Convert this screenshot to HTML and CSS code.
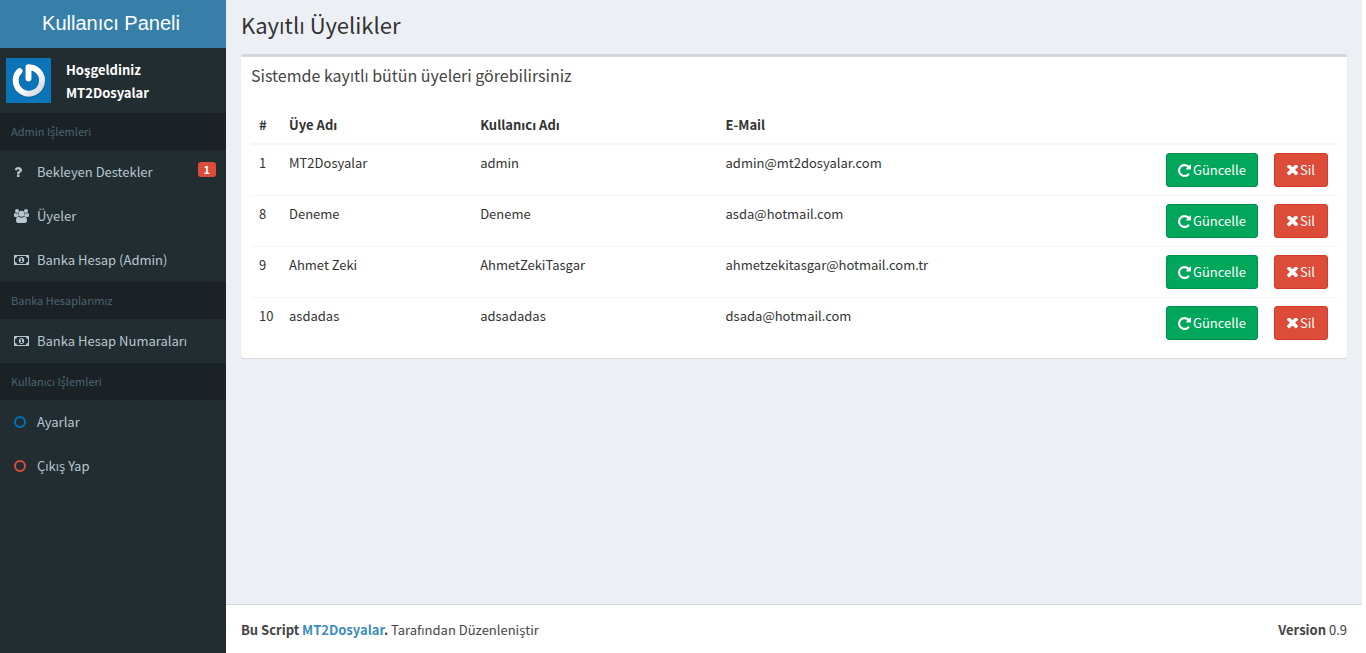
FILE: index.html
```html
<!DOCTYPE html>
<html lang="tr">
<head>
  <meta charset="UTF-8">
  <meta name="viewport" content="width=device-width, initial-scale=1.0">
  <title>Kullanıcı Paneli</title>
  <link rel="stylesheet" href="styles.css">
</head>
<body>
  <!-- Icon set -->
  <svg class="icon-defs" xmlns="http://www.w3.org/2000/svg">
    <symbol id="icon-question" viewBox="0 0 1792 1792">
      <path d="M1088 1256v240q0 16-12 28t-28 12h-240q-16 0-28-12t-12-28v-240q0-16 12-28t28-12h240q16 0 28 12t12 28zm316-600q0 54-15.500 101t-35 76.500-55 59.500-57.500 43.500-61 35.500q-41 23-68.500 65t-27.500 67q0 17-12 32.500t-28 15.500h-240q-15 0-25.500-18.500t-10.500-37.500v-45q0-83 65-156.500t143-108.500q59-27 84-56t25-76q0-42-46.500-74t-107.500-32q-65 0-108 29-35 25-107 115-13 16-31 16-12 0-25-8l-164-125q-13-10-15.500-25t5.500-28q160-266 464-266 80 0 161 31t146 83 106 127.500 41 158.500z"/>
    </symbol>
    <symbol id="icon-users" viewBox="0 0 15 14">
      <circle cx="3" cy="2" r="2"/>
      <circle cx="12" cy="2" r="2"/>
      <path d="M0 6.500C0 5 .3 3.900 1.200 3.900c.6.400 1.200.6 1.800.6.500 0 .9-.1 1.300-.3C4.100 5.400 4.500 6.400 5.100 7.100 4.200 7.100 3.400 7.500 2.900 8H1.600C.6 8 0 7.500 0 6.500z"/>
      <path d="M15 6.500c0-1.500-.3-2.600-1.200-2.600-.6.400-1.200.6-1.800.6-.5 0-.9-.1-1.300-.3.200 1.200-.2 2.200-.8 2.900.9 0 1.700.4 2.200.9h1.300c1 0 1.600-.5 1.600-1.500z"/>
      <circle cx="7.500" cy="4.800" r="3"/>
      <path d="M2 11.800c0-2.500.7-4.200 2.500-4.200.9.700 1.900 1.100 3 1.100s2.100-.4 3-1.100c1.800 0 2.500 1.700 2.500 4.200 0 1.300-.9 2.200-2.100 2.200H4.100C2.900 14 2 13.100 2 11.800z"/>
    </symbol>
    <symbol id="icon-money" viewBox="0 0 15 10">
      <path fill-rule="evenodd" d="M.5 0h14q.5 0 .5.500v9q0 .5-.5.500H.5Q0 10 0 9.500v-9Q0 0 .5 0zM3 1Q3 3 1 3v4q2 0 2 2h9q0-2 2-2V3q-2 0-2-2z"/>
      <path fill-rule="evenodd" d="M7.500 1.900C9.200 1.900 10.200 3.200 10.200 5S9.200 8.100 7.500 8.100 4.800 6.800 4.800 5 5.800 1.900 7.500 1.900zM7.100 3L6 4l.5.600.6-.4v1.900h-.9V7h2.700v-.9H8V3z"/>
    </symbol>
    <symbol id="icon-circle" viewBox="0 0 12 12">
      <circle cx="6" cy="6" r="5" fill="none" stroke="currentColor" stroke-width="2"/>
    </symbol>
    <symbol id="icon-repeat" viewBox="128 128 1536 1536">
      <path d="M1664 256v448q0 26-19 45t-45 19h-448q-42 0-59-40-17-39 14-69l138-138q-148-137-349-137-104 0-198.500 40.500t-163.500 109.500-109.500 163.500-40.500 198.500 40.500 198.500 109.500 163.500 163.500 109.500 198.500 40.500q119 0 225-52t179-147q7-10 23-12 15 0 25 9l137 138q9 8 9.500 20.500t-7.500 22.500q-109 132-264 204.500t-327 72.500q-156 0-298-61t-245-164-164-245-61-298 61-298 164-245 245-164 298-61q147 0 284.500 55.500t244.500 156.500l130-129q29-31 70-14 39 17 39 59z"/>
    </symbol>
    <symbol id="icon-times" viewBox="302 434 1188 1188">
      <path d="M1490 1322q0 40-28 68l-136 136q-28 28-68 28t-68-28l-294-294-294 294q-28 28-68 28t-68-28l-136-136q-28-28-28-68t28-68l294-294-294-294q-28-28-28-68t28-68l136-136q28-28 68-28t68 28l294 294 294-294q28-28 68-28t68 28l136 136q28 28 28 68t-28 68l-294 294 294 294q28 28 28 68z"/>
    </symbol>
  </svg>

  <div class="wrapper">
    <aside class="sidebar">
      <a href="#" class="logo">Kullanıcı Paneli</a>

      <div class="user-panel">
        <svg class="avatar" viewBox="0 0 45 45" role="img" aria-label="Profil">
          <defs>
            <linearGradient id="power" x1="0" y1="0" x2="1" y2="1">
              <stop offset="0.500" stop-color="#fff"/>
              <stop offset="1" stop-color="#ccd2d8"/>
            </linearGradient>
          </defs>
          <rect width="45" height="45" fill="#0a74b9"/>
          <g fill="none" stroke-linecap="round" stroke-linejoin="round">
            <path d="M13.300 13.600A13.400 13.400 0 1 0 22.500 9.500V20.500" stroke="#08639f" stroke-width="7"/>
            <path d="M13.500 13.200A13.200 13.200 0 1 0 22.500 9.300V20.500" stroke="url(#power)" stroke-width="6"/>
          </g>
        </svg>
        <div class="user-info">
          <p>Hoşgeldiniz</p>
          <p>MT2Dosyalar</p>
        </div>
      </div>

      <ul class="sidebar-menu">
        <li class="menu-header">Admin İşlemleri</li>
        <li>
          <a href="#">
            <span class="menu-icon"><svg class="icon-q"><use href="#icon-question"/></svg></span>
            Bekleyen Destekler
            <span class="badge">1</span>
          </a>
        </li>
        <li>
          <a href="#">
            <span class="menu-icon"><svg class="icon-u"><use href="#icon-users"/></svg></span>
            Üyeler
          </a>
        </li>
        <li>
          <a href="#">
            <span class="menu-icon"><svg class="icon-m"><use href="#icon-money"/></svg></span>
            Banka Hesap (Admin)
          </a>
        </li>
        <li class="menu-header">Banka Hesaplarımız</li>
        <li>
          <a href="#">
            <span class="menu-icon"><svg class="icon-m"><use href="#icon-money"/></svg></span>
            Banka Hesap Numaraları
          </a>
        </li>
        <li class="menu-header">Kullanıcı İşlemleri</li>
        <li>
          <a href="#">
            <span class="menu-icon text-blue"><svg class="icon-c"><use href="#icon-circle"/></svg></span>
            Ayarlar
          </a>
        </li>
        <li>
          <a href="#">
            <span class="menu-icon text-red"><svg class="icon-c"><use href="#icon-circle"/></svg></span>
            Çıkış Yap
          </a>
        </li>
      </ul>
    </aside>

    <div class="page">
      <main class="content">
        <h1>Kayıtlı Üyelikler</h1>

        <section class="box">
          <h2>Sistemde kayıtlı bütün üyeleri görebilirsiniz</h2>
          <table class="table">
            <colgroup>
              <col class="col-id">
              <col class="col-name">
              <col class="col-user">
              <col>
              <col class="col-update">
              <col class="col-delete">
            </colgroup>
            <thead>
              <tr>
                <th>#</th>
                <th>Üye Adı</th>
                <th>Kullanıcı Adı</th>
                <th>E-Mail</th>
                <th></th>
                <th></th>
              </tr>
            </thead>
            <tbody>
              <tr>
                <td>1</td>
                <td>MT2Dosyalar</td>
                <td>admin</td>
                <td>admin@mt2dosyalar.com</td>
                <td><button type="button" class="btn btn-success"><svg class="icon-r"><use href="#icon-repeat"/></svg>Güncelle</button></td>
                <td><button type="button" class="btn btn-danger"><svg class="icon-x"><use href="#icon-times"/></svg>Sil</button></td>
              </tr>
              <tr>
                <td>8</td>
                <td>Deneme</td>
                <td>Deneme</td>
                <td>asda@hotmail.com</td>
                <td><button type="button" class="btn btn-success"><svg class="icon-r"><use href="#icon-repeat"/></svg>Güncelle</button></td>
                <td><button type="button" class="btn btn-danger"><svg class="icon-x"><use href="#icon-times"/></svg>Sil</button></td>
              </tr>
              <tr>
                <td>9</td>
                <td>Ahmet Zeki</td>
                <td>AhmetZekiTasgar</td>
                <td>ahmetzekitasgar@hotmail.com.tr</td>
                <td><button type="button" class="btn btn-success"><svg class="icon-r"><use href="#icon-repeat"/></svg>Güncelle</button></td>
                <td><button type="button" class="btn btn-danger"><svg class="icon-x"><use href="#icon-times"/></svg>Sil</button></td>
              </tr>
              <tr>
                <td>10</td>
                <td>asdadas</td>
                <td>adsadadas</td>
                <td>dsada@hotmail.com</td>
                <td><button type="button" class="btn btn-success"><svg class="icon-r"><use href="#icon-repeat"/></svg>Güncelle</button></td>
                <td><button type="button" class="btn btn-danger"><svg class="icon-x"><use href="#icon-times"/></svg>Sil</button></td>
              </tr>
            </tbody>
          </table>
        </section>
      </main>

      <footer class="footer">
        <div><strong>Bu Script <a href="#">MT2Dosyalar</a>.</strong> Tarafından Düzenleniştir</div>
        <div><strong>Version</strong> 0.9</div>
      </footer>
    </div>
  </div>
</body>
</html>
```
FILE: styles.css
```css
* {
  box-sizing: border-box;
}

body {
  margin: 0;
  background-color: #fff;
  color: #333;
  font-family: 'Source Sans Pro', 'Noto Sans CJK SC', 'Open Sans', sans-serif;
  font-size: 13px;
  line-height: 20px;
}

a {
  color: #3c8dbc;
  text-decoration: none;
}

svg {
  display: block;
  flex: none;
  fill: currentColor;
}

.icon-defs {
  display: none;
}

.wrapper {
  display: flex;
  min-height: 100vh;
  margin-right: 4px;
}

/* Sidebar */
.sidebar {
  flex: none;
  width: 226px;
  background-color: #222d32;
}

.logo {
  display: block;
  height: 48px;
  padding-right: 4px;
  background-color: #367fa9;
  color: #fff;
  font-family: 'Helvetica Neue', 'Liberation Sans', Arial, sans-serif;
  font-size: 20px;
  line-height: 46px;
  text-align: center;
}

.user-panel {
  display: flex;
  gap: 15px;
  height: 65px;
  padding: 10px 6px;
}

.avatar {
  width: 45px;
  height: 45px;
}

.user-info p {
  margin: 0;
  color: #fff;
  font-weight: bold;
  line-height: 23px;
}

.sidebar-menu {
  margin: 0;
  padding: 0;
  list-style: none;
}

.menu-header {
  padding: 8px 11px 9px;
  background-color: #1a2226;
  color: #4b646f;
  font-size: 11px;
}

.sidebar-menu a {
  display: flex;
  align-items: center;
  height: 44px;
  padding: 0 10px 0 14px;
  color: #b8c7ce;
}

.sidebar-menu a:hover {
  background-color: #1e282c;
  color: #fff;
}

.menu-icon {
  flex: none;
  width: 23px;
}

.text-blue {
  color: #0073b7;
}

.text-red {
  color: #dd4b39;
}

.badge {
  align-self: flex-start;
  margin: 12px 0 0 auto;
  padding: 0 6px;
  border-radius: 3px;
  background-color: #dd4b39;
  color: #fff;
  font-size: 11px;
  font-weight: bold;
  line-height: 15px;
}

.icon-q {
  width: 14px;
  height: 14px;
  margin-left: -3px;
}

.icon-u {
  width: 15px;
  height: 14px;
}

.icon-m {
  width: 15px;
  height: 10px;
}

.icon-c {
  width: 12px;
  height: 12px;
}

/* Content */
.page {
  display: flex;
  flex: 1;
  flex-direction: column;
  background-color: #ecf0f5;
}

.content {
  flex: 1;
  padding: 11px 15px;
}

h1 {
  margin: 0 0 17px;
  font-size: 22px;
  font-weight: normal;
  line-height: 26px;
}

.box {
  padding: 0 10px 10px;
  border-top: 3px solid #d2d6de;
  border-radius: 3px;
  background-color: #fff;
  box-shadow: 0 1px 1px rgba(0, 0, 0, 0.1);
}

h2 {
  margin: 0;
  padding: 8px 0 22px;
  color: #444;
  font-size: 16px;
  font-weight: normal;
}

.table {
  width: 100%;
  table-layout: fixed;
  border-collapse: separate;
  border-spacing: 0;
}

.col-id {
  width: 30px;
}

.col-name {
  width: 17.6%;
}

.col-user {
  width: 22.6%;
}

.col-update {
  width: 108px;
}

.col-delete {
  width: 71px;
}

th {
  padding: 8px;
  border-bottom: 2px solid #f4f4f4;
  text-align: left;
}

td {
  padding: 8px;
  border-bottom: 1px solid #f4f4f4;
  vertical-align: top;
}

tr:last-child td {
  border-bottom: 0;
}

.btn {
  display: flex;
  align-items: center;
  justify-content: center;
  gap: 2px;
  min-width: 54px;
  height: 34px;
  padding: 0 11px;
  border: 1px solid transparent;
  border-radius: 3px;
  color: #fff;
  font: inherit;
  cursor: pointer;
}

.btn-success {
  border-color: #008d4c;
  background-color: #00a65a;
}

.btn-success:hover {
  background-color: #008d4c;
}

.btn-danger {
  border-color: #d73925;
  background-color: #dd4b39;
}

.btn-danger:hover {
  background-color: #d73925;
}

.icon-r {
  width: 13px;
  height: 13px;
}

.icon-x {
  width: 11px;
  height: 11px;
}

/* Footer */
.footer {
  display: flex;
  justify-content: space-between;
  padding: 15px 15px 13px;
  border-top: 1px solid #d2d6de;
  background-color: #fff;
  color: #444;
}
```
